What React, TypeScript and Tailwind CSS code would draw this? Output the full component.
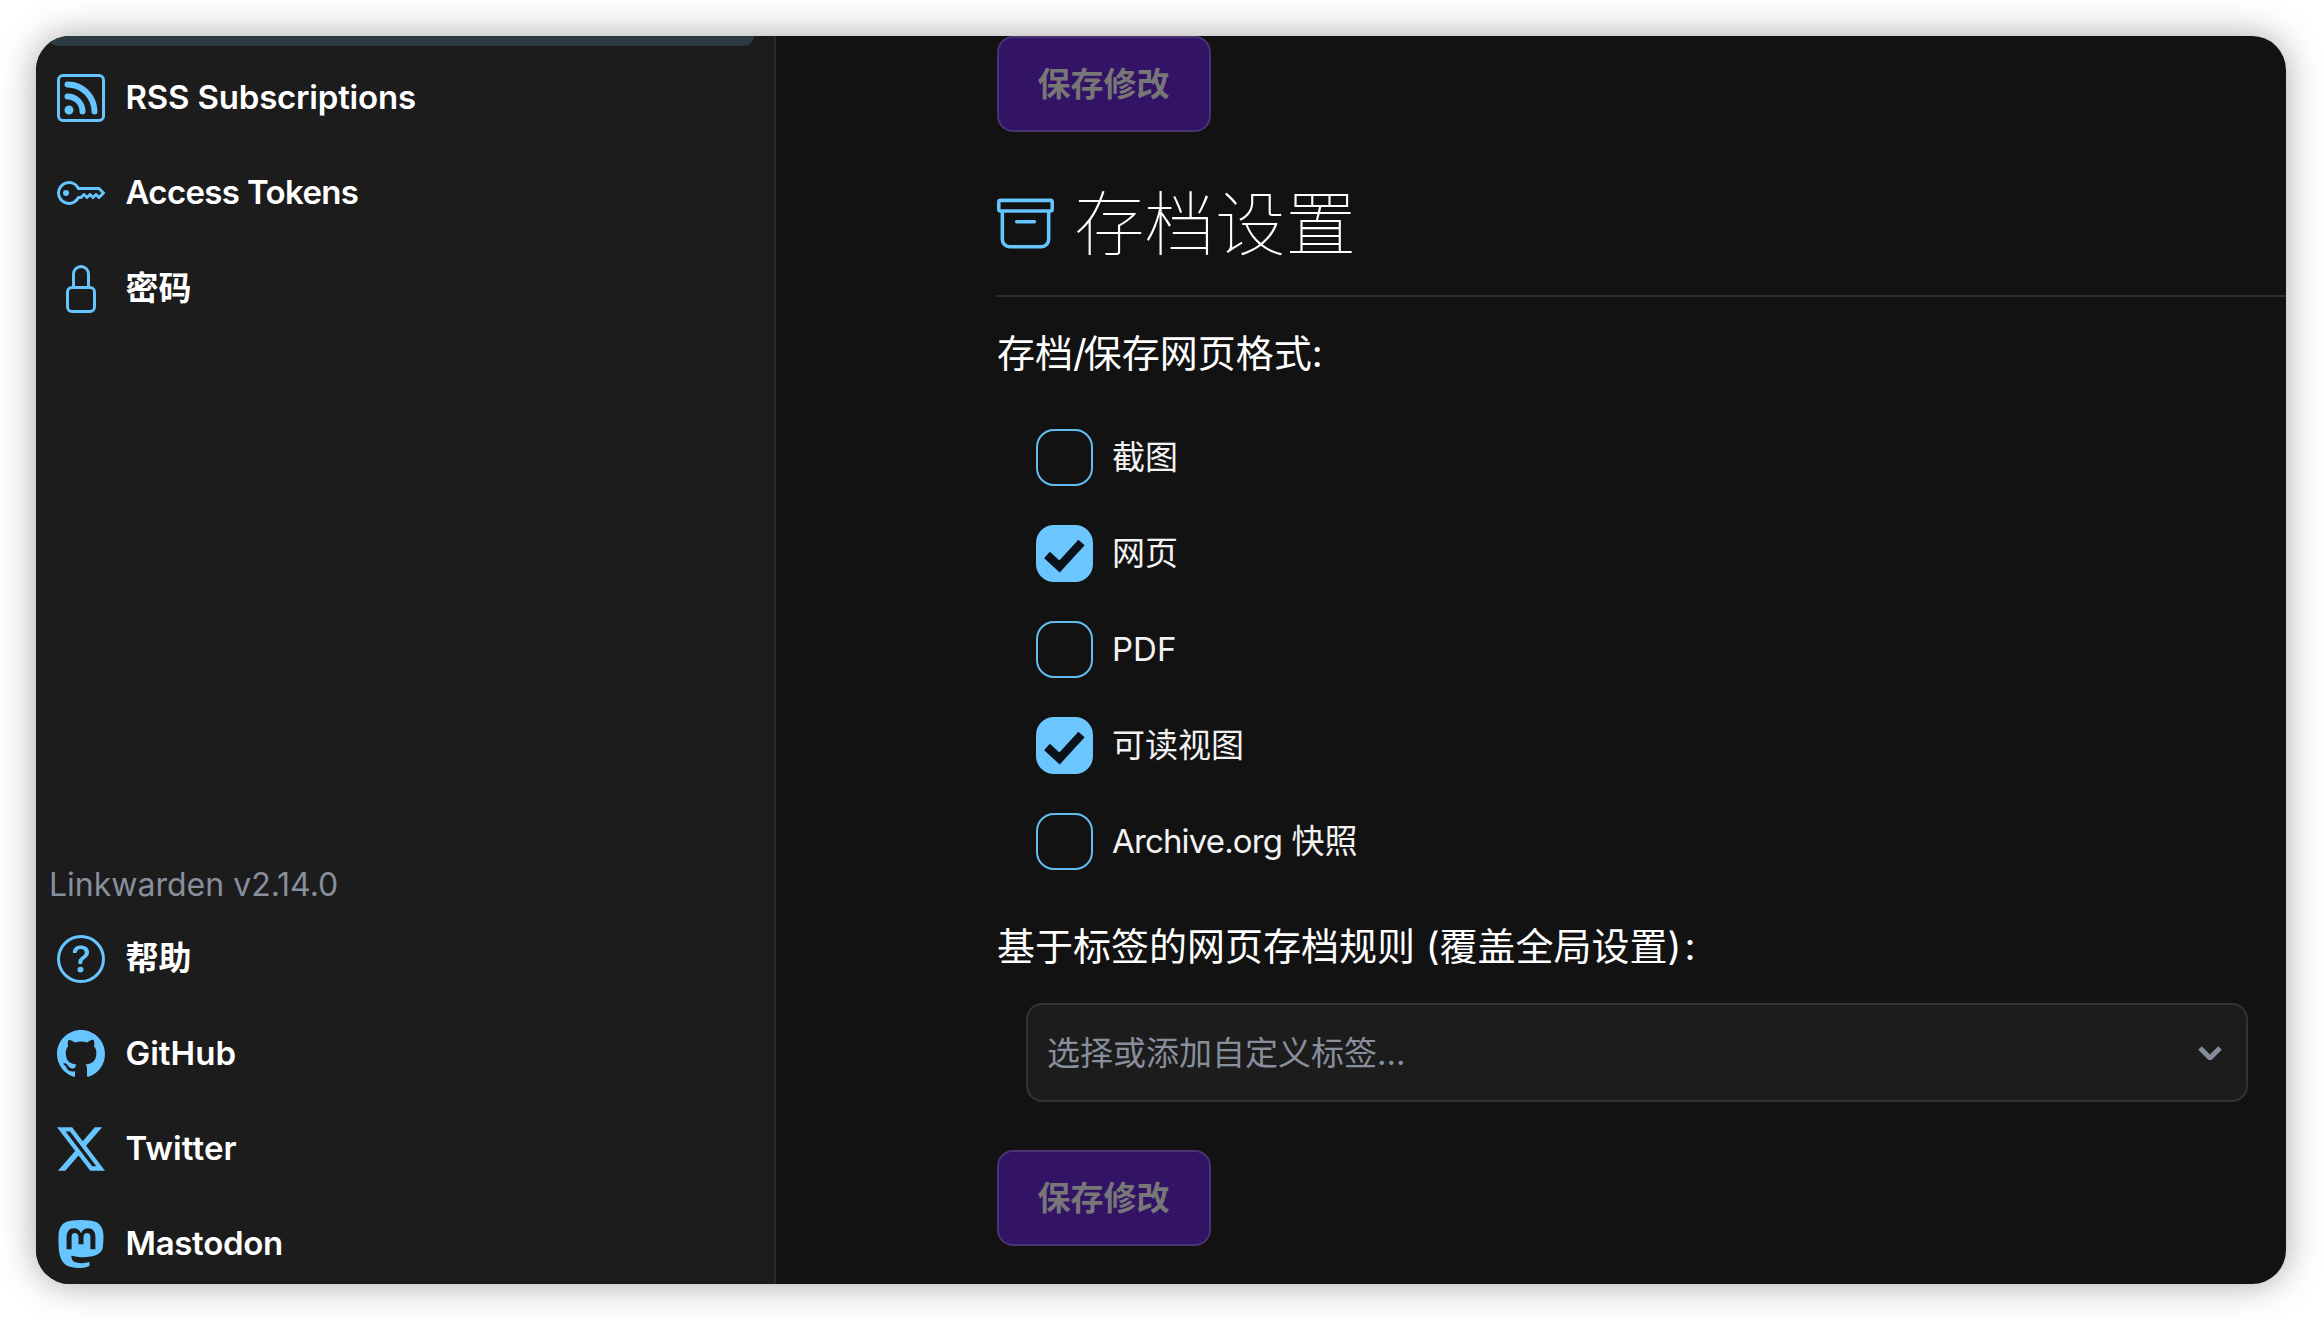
import type { ReactNode } from "react";
import {
  BsArchive,
  BsGithub,
  BsKey,
  BsLock,
  BsMastodon,
  BsQuestionCircle,
  BsRss,
  BsTwitterX,
} from "react-icons/bs";

function NavItem({ icon, label, tracking }: { icon: ReactNode; label: string; tracking?: string }) {
  return (
    <div className="flex h-[95px] shrink-0 items-center gap-[20.5px] pl-[21px] text-[33px] font-semibold text-white">
      <span className="flex w-[48px] items-center justify-center text-[48px] text-[#66c4ff]">{icon}</span>
      <span className={tracking}>{label}</span>
    </div>
  );
}

function SaveButton() {
  return (
    <button className="flex h-[96px] w-[214px] shrink-0 items-center justify-center rounded-[16px] border-2 border-[#4a3373] bg-[#321366] pt-[2px] pr-[1px] text-[33px] font-semibold text-[#777777]">
      保存修改
    </button>
  );
}

function FormatOption({ label, checked }: { label: ReactNode; checked?: boolean }) {
  return (
    <label className="flex h-[57px] items-center gap-[19px] text-[33px] text-[#f2f2f2]">
      {checked ? (
        <span className="h-[57px] w-[57px] rounded-[18px] bg-[#6bc6ff]">
          <svg viewBox="0 0 57 57" className="h-[57px] w-[57px]">
            <path d="M11 30 L23.5 41.5 L45.5 17.5" fill="none" stroke="#0b1219" strokeWidth="8.5" />
          </svg>
        </span>
      ) : (
        <span className="h-[57px] w-[57px] rounded-[18px] border-2 border-[#63bdf2]" />
      )}
      <span>{label}</span>
    </label>
  );
}

export default function App() {
  return (
    <div className="h-[1320px] w-[2322px] overflow-hidden bg-white pt-[36px] pl-[36px] font-['Inter','Noto_Sans_CJK_SC',sans-serif]">
      <div className="flex h-[1248px] w-[2250px] overflow-hidden rounded-[34px] bg-[#121212] shadow-[0_0_36px_rgba(0,0,0,0.35)]">
        {/* sidebar */}
        <aside className="flex h-full w-[740px] shrink-0 flex-col justify-between border-r-2 border-[#2a2a2a] bg-[#1c1c1c]">
          <div className="flex flex-col gap-[0.5px]">
            <div className="mb-[3.5px] ml-[12px] h-[10px] w-[706px] rounded-b-[14px] bg-[#2c3a41]" />
            <NavItem icon={<BsRss />} label="RSS Subscriptions" tracking="tracking-[-0.2px]" />
            <NavItem icon={<BsKey />} label="Access Tokens" tracking="tracking-[-0.65px]" />
            <NavItem icon={<BsLock />} label="密码" />
          </div>
          <div className="mb-[-7px]">
            <div className="mb-[4.5px] ml-[13px] h-[44px] text-[32px] leading-[44px] text-[#878e9c]">Linkwarden v2.14.0</div>
            <NavItem icon={<BsQuestionCircle />} label="帮助" />
            <NavItem icon={<BsGithub />} label="GitHub" />
            <NavItem icon={<BsTwitterX />} label="Twitter" tracking="tracking-[0.1px]" />
            <NavItem icon={<BsMastodon />} label="Mastodon" tracking="tracking-[-0.3px]" />
          </div>
        </aside>

        {/* settings */}
        <main className="flex min-w-0 flex-1 flex-col pl-[221px] text-white">
          <SaveButton />

          <div className="mt-[45px] flex h-[120px] items-start border-b-2 border-[#2e2e2e]">
            <div className="flex h-[96px] items-center gap-[20px]">
              <BsArchive className="mb-[4px] text-[57px] text-[#66c4ff]" />
              <h2 className="text-[70.5px] leading-[96px] font-thin">存档设置</h2>
            </div>
          </div>

          <div className="mt-[30px] h-[52px] text-[38px] leading-[52px]">
            存档<span className="tracking-[-3px]">/</span>保存网页格式:
          </div>

          <div className="mt-[50px] ml-[39px] flex flex-col gap-[39px]">
            <FormatOption label="截图" />
            <FormatOption label="网页" checked />
            <FormatOption label="PDF" />
            <FormatOption label="可读视图" checked />
            <FormatOption
              label={
                <>
                  <span className="tracking-[-0.85px]">Archive.org</span> 快照
                </>
              }
            />
          </div>

          <div className="mt-[50px] h-[52px] text-[38px] leading-[52px]">
            基于标签的网页存档规则 (覆盖全局设置)<span className="ml-[3px]">:</span>
          </div>

          <div className="mt-[31px] mr-[38px] ml-[29px] flex h-[99px] shrink-0 items-center justify-between rounded-[16px] border-2 border-[#333333] bg-[#1c1c1c] pr-[24px] pl-[19px]">
            <span className="pt-[2px] text-[33px] text-[#878e9c]">选择或添加自定义标签...</span>
            <svg viewBox="0 0 24 14" className="h-[14px] w-[24px]">
              <path d="M2 2 L12 12 L22 2" fill="none" stroke="#858c99" strokeWidth="5" />
            </svg>
          </div>

          <div className="mt-[48px]">
            <SaveButton />
          </div>
        </main>
      </div>
    </div>
  );
}
